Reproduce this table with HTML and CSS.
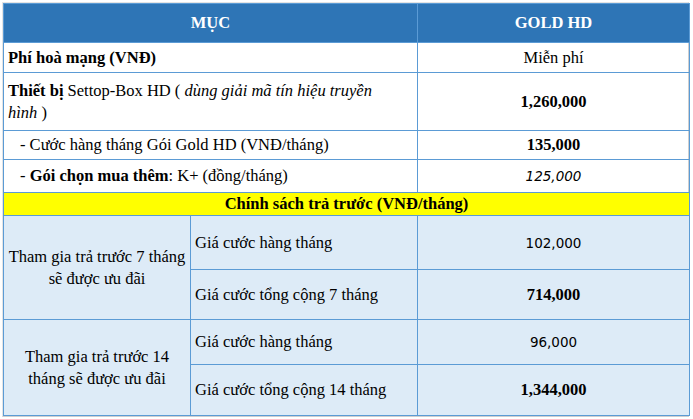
FILE: index.html
```html
<!DOCTYPE html>
<html lang="vi">
<head>
<meta charset="utf-8">
<title>Gói Gold HD</title>
<link rel="stylesheet" href="styles.css">
</head>
<body>
<div class="frame">
<table class="price">
  <colgroup>
    <col class="c1"><col class="c2"><col class="c3">
  </colgroup>
  <tr class="h-head">
    <th colspan="2">MỤC</th>
    <th>GOLD HD</th>
  </tr>
  <tr class="h-r1">
    <td colspan="2" class="label"><b>Phí hoà mạng (VNĐ)</b></td>
    <td class="val">Miễn phí</td>
  </tr>
  <tr class="h-r2">
    <td colspan="2" class="label"><b>Thiết bị</b> Settop-Box HD ( <i>dùng giải mã tín hiệu truyền<br>hình</i> )</td>
    <td class="val"><b>1,260,000</b></td>
  </tr>
  <tr class="h-r3">
    <td colspan="2" class="label indent">- Cước hàng tháng Gói Gold HD (VNĐ/tháng)</td>
    <td class="val"><b>135,000</b></td>
  </tr>
  <tr class="h-r4">
    <td colspan="2" class="label indent">- <b>Gói chọn mua thêm</b>: K+ (đồng/tháng)</td>
    <td class="val sans"><i>125,000</i></td>
  </tr>
  <tr class="h-yel">
    <td colspan="3" class="yellow"><b>Chính sách trả trước (VNĐ/tháng)</b></td>
  </tr>
  <tr class="h-7a blue">
    <td rowspan="2" class="group">Tham gia trả trước 7 tháng<br>sẽ được ưu đãi</td>
    <td class="sub">Giá cước hàng tháng</td>
    <td class="val sans">102,000</td>
  </tr>
  <tr class="h-7b blue">
    <td class="sub">Giá cước tổng cộng 7 tháng</td>
    <td class="val"><b>714,000</b></td>
  </tr>
  <tr class="h-14a blue">
    <td rowspan="2" class="group">Tham gia trả trước 14<br>tháng sẽ được ưu đãi</td>
    <td class="sub">Giá cước hàng tháng</td>
    <td class="val sans">96,000</td>
  </tr>
  <tr class="h-14b blue">
    <td class="sub">Giá cước tổng cộng 14 tháng</td>
    <td class="val"><b>1,344,000</b></td>
  </tr>
</table>
</div>
</body>
</html>
```
FILE: styles.css
```css
html, body {
  margin: 0;
  padding: 0;
  background: #ffffff;
}
body {
  font-family: "Liberation Serif", "Times New Roman", serif;
  font-size: 16.5px;
  color: #000000;
}
.frame {
  margin: 2px 0 0 2px;
  width: 687px;
  border-right: 1px solid #cfcfcf;
  border-bottom: 1px solid #cfcfcf;
  border-top: 1px solid #e4e4e4;
  border-left: 1px solid #e4e4e4;
  box-sizing: border-box;
}
.price {
  border-collapse: collapse;
  width: 686px;
  table-layout: fixed;
  border: 1px solid #5b9bd5;
}
.c1 { width: 187px; }
.c2 { width: 227px; }
.c3 { width: 272px; }
.price th, .price td {
  border: 1px solid #5b9bd5;
  padding: 0 4px;
  line-height: 22px;
  box-sizing: border-box;
}
.price th {
  background: #2e75b6;
  color: #ffffff;
  font-weight: bold;
  text-align: center;
}
.price .label { text-align: left; }
.price .indent { padding-left: 16px; }
.price .val { text-align: center; }
.price .sans {
  font-family: "DejaVu Sans", Tahoma, sans-serif;
  font-size: 13.5px;
}
.price .yellow {
  background: #ffff00;
  text-align: center;
}
.price .blue td { background: #ddebf7; }
.price .group { text-align: center; }
.price .sub { text-align: left; }
.h-head { height: 39px; }
.h-r1 { height: 30px; }
.h-r2 { height: 58px; }
.h-r3 { height: 29px; }
.h-r4 { height: 33px; }
.h-yel { height: 23px; }
.h-7a { height: 54px; }
.h-7b { height: 50px; }
.h-14a { height: 45px; }
.h-14b { height: 51px; }
```
